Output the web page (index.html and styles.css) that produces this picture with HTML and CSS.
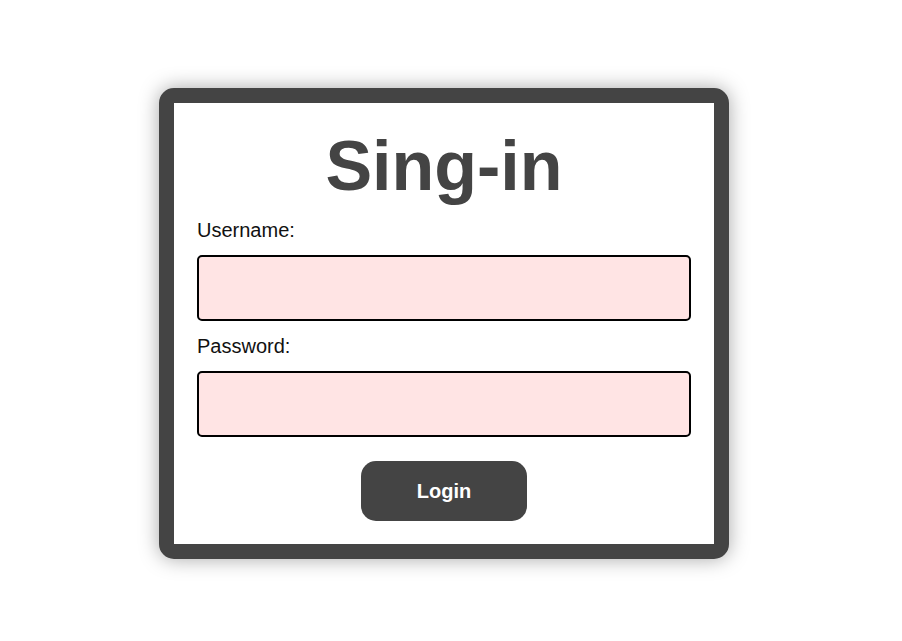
FILE: index.html
```html
<!DOCTYPE html>
<html lang="en">
<head>
<meta charset="utf-8">
<title>Sing-in</title>
<link rel="stylesheet" href="styles.css">
</head>
<body>
<main class="page">
  <form class="card">
    <h1 class="title">Sing-in</h1>
    <label class="label label-first" for="username">Username:</label>
    <input class="field" id="username" type="text">
    <label class="label" for="password">Password:</label>
    <input class="field" id="password" type="password">
    <button class="btn" type="button">Login</button>
  </form>
</main>
</body>
</html>
```

FILE: styles.css
```css
html, body {
  margin: 0;
  padding: 0;
  background: #ffffff;
}

.page {
  box-sizing: border-box;
  min-height: 100vh;
  display: flex;
  justify-content: center;
  align-items: flex-start;
  padding: 88px 14px 40px 0;
  font-family: "Liberation Sans", Arial, sans-serif;
}

.card {
  box-sizing: border-box;
  width: 570px;
  display: flex;
  flex-direction: column;
  padding: 23px 23px 23px 23px;
  background: #ffffff;
  border: 15px solid #444444;
  border-radius: 15px;
  box-shadow: 0 0 20px rgba(0, 0, 0, 0.35);
}

.title {
  margin: 0;
  font-size: 70px;
  line-height: 80px;
  font-weight: bold;
  color: #444444;
  text-align: center;
}

.label {
  display: block;
  margin: 14px 0 13px;
  font-size: 20px;
  line-height: 23px;
  color: #111111;
}

.label-first {
  margin-top: 13px;
}

.field {
  box-sizing: border-box;
  display: block;
  width: 100%;
  height: 66px;
  margin: 0;
  padding: 0 12px;
  border: 2px solid #000000;
  border-radius: 5px;
  background: #ffe4e4;
  font-family: inherit;
  font-size: 20px;
  outline: none;
}

.btn {
  align-self: center;
  width: 166px;
  height: 60px;
  margin-top: 24px;
  border: none;
  border-radius: 15px;
  background: #444444;
  color: #ffffff;
  font-family: inherit;
  font-size: 20px;
  font-weight: bold;
  cursor: pointer;
}
```
